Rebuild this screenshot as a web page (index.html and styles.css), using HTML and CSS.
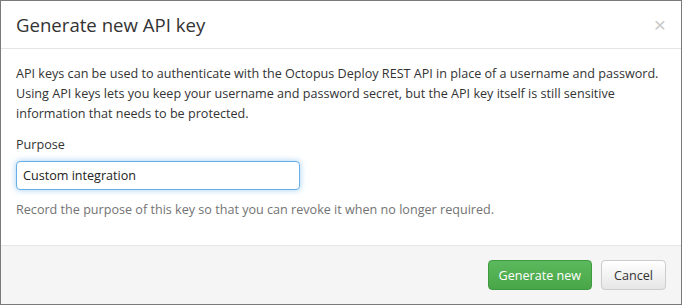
FILE: index.html
```html
<!DOCTYPE html>
<html lang="en">
<head>
  <meta charset="UTF-8" />
  <title>Generate new API key</title>
  <link rel="stylesheet" href="styles.css">
</head>
<body>
  <div class="modal">
    <div class="modal-header">
      <h4 class="modal-title">Generate new API key</h4>
      <button class="close" type="button">&times;</button>
    </div>

    <div class="modal-body">
      <p>
        API keys can be used to authenticate with the Octopus Deploy REST API in place of a username and password.
        Using API keys lets you keep your username and password secret, but the API key itself is still sensitive
        information that needs to be protected.
      </p>
      <label for="purpose">Purpose</label>
      <input id="purpose" type="text" value="Custom integration" />
      <p class="help-block">Record the purpose of this key so that you can revoke it when no longer required.</p>
    </div>

    <div class="modal-footer">
      <button class="btn btn-success">Generate new</button>
      <button class="btn btn-default">Cancel</button>
    </div>
  </div>
</body>
</html>
```

FILE: styles.css
```css
/* Reset and Base */
* {
  box-sizing: border-box;
}

html, body {
  height: 100%;
}

body {
  margin: 0;
  font-family: 'Open Sans', 'Liberation Sans', sans-serif;
  font-size: 12.6px;
  color: #333;
  background: #fff;
}

/* Modal */
.modal {
  height: 305px;
  border: 1px solid #7a7a7a;
  display: flex;
  flex-direction: column;
  background: #fff;
}

.modal-header {
  display: flex;
  align-items: center;
  justify-content: space-between;
  height: 48px;
  padding: 0 15px;
  border-bottom: 1px solid #e5e5e5;
}

.modal-title {
  margin: 0;
  font-size: 18.6px;
  font-weight: 400;
  color: #333;
}

.close {
  border: none;
  background: none;
  padding: 0;
  font-size: 21px;
  line-height: 1;
  color: #c8c8c8;
  cursor: pointer;
  font-family: 'Liberation Sans', sans-serif;
}

.modal-body {
  flex: 1;
  padding: 15px 15px 0;
}

.modal-body p {
  margin: 0 0 11px;
  line-height: 20px;
}

label {
  display: block;
  line-height: 20px;
  margin-bottom: 6px;
}

input {
  display: block;
  width: 284px;
  height: 29px;
  padding: 4px 6px;
  font: inherit;
  color: #222;
  border: 1px solid #66afe9;
  border-radius: 4px;
  box-shadow: 0 0 6px rgba(102, 175, 233, 0.6);
  outline: none;
}

.help-block {
  margin-top: 10px !important;
  color: #737373;
}

/* Footer */
.modal-footer {
  display: flex;
  justify-content: flex-end;
  gap: 9px;
  height: 59px;
  padding: 14px 15px 0;
  background: #f5f5f5;
  border-top: 1px solid #e5e5e5;
}

.btn {
  height: 30px;
  padding: 0 12px;
  font: inherit;
  border-radius: 4px;
  cursor: pointer;
}

.btn-success {
  padding: 0 10px;
  color: #fff;
  background: linear-gradient(#5cb85c, #48a648);
  border: 1px solid #3e9a3e;
}

.btn-default {
  color: #333;
  background: linear-gradient(#fff, #e6e6e6);
  border: 1px solid #ccc;
}
```
